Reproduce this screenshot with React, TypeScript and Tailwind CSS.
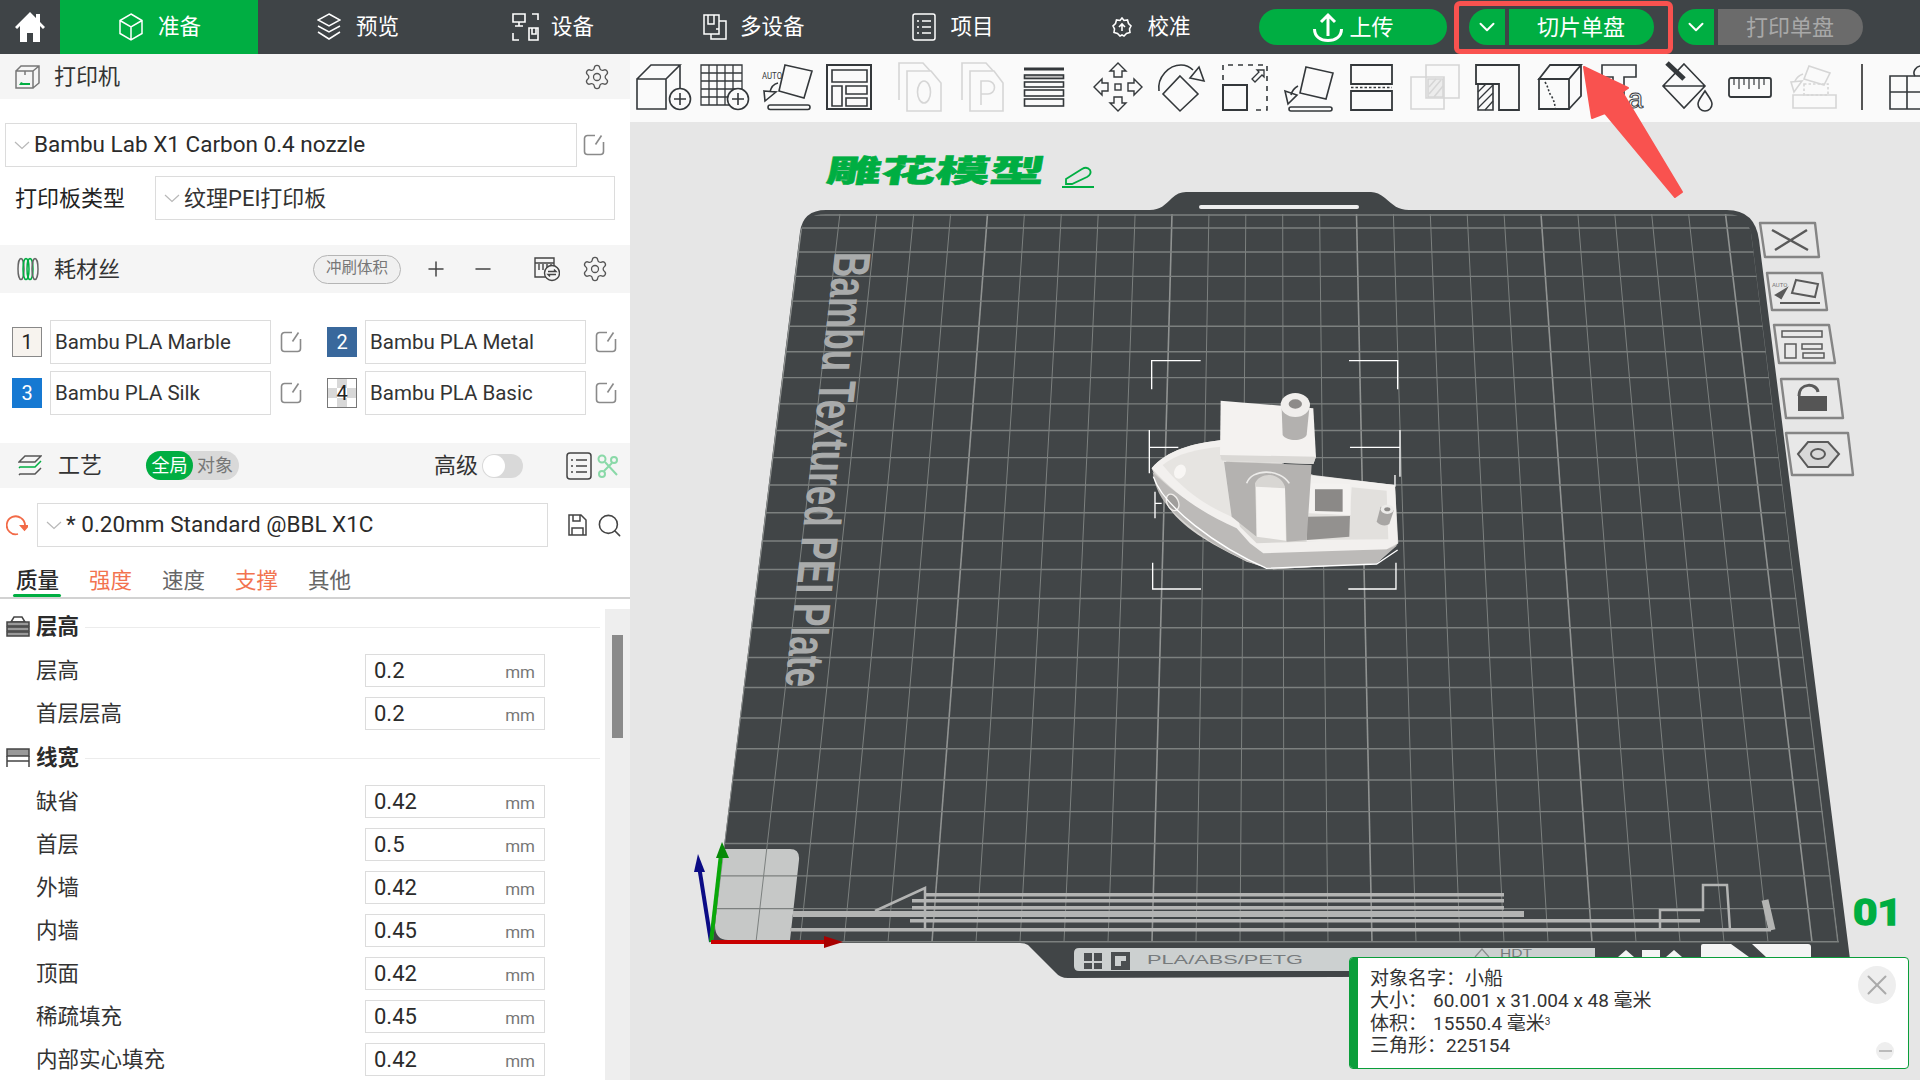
import { Settings, Plus, Minus, Search, X, ChevronDown } from "lucide-react";

const green = "#00ae42";
const dark = "#34383b";

function Chevron({ className = "" }: { className?: string }) {
  return (
    <svg width="16" height="9" viewBox="0 0 16 9" fill="none" stroke="#b8b8b8" strokeWidth="1.2" className={className}>
      <path d="M1 1l7 6.5L15 1" />
    </svg>
  );
}

function EditIcon({ className = "" }: { className?: string }) {
  return (
    <svg width="22" height="22" viewBox="0 0 22 22" fill="none" stroke="#8a8a8a" strokeWidth="1.6" className={className}>
      <path d="M12 1.5H4.5a3 3 0 0 0-3 3v13a3 3 0 0 0 3 3h13a3 3 0 0 0 3-3V8" />
      <path d="M18.5 1.5l-6 9" />
    </svg>
  );
}

function SectionTitle({ title, icon }: { title: string; icon: "stack" | "width" }) {
  return (
    <div className="flex items-center h-[36px] pr-[5px]">
      <svg width="24" height="22" viewBox="0 0 24 22" className="ml-[6px]" fill="none" stroke="#444" strokeWidth="1.5">
        {icon === "stack" ? (
          <g>
            <path d="M5 6l3-5h8l3 5z" />
            <rect x="1" y="6" width="22" height="4" fill="#999" />
            <rect x="1" y="11" width="22" height="4" fill="#999" />
            <rect x="1" y="16" width="22" height="4" fill="#999" />
          </g>
        ) : (
          <g>
            <rect x="1" y="2" width="22" height="7" fill="#999" />
            <path d="M1 9v11M23 9v11M1 14h22" />
          </g>
        )}
      </svg>
      <span className="ml-[6px] text-[21.5px] font-bold text-[#2b2b2b] leading-none">{title}</span>
      <div className="ml-[6px] flex-1 h-px bg-[#ececec]" />
    </div>
  );
}

function ParamRow({ label, value }: { label: string; value: string }) {
  return (
    <div className="flex items-center h-[33px]">
      <span className="ml-[36px] w-[329px] text-[21.5px] text-[#333] leading-none">{label}</span>
      <div className="w-[180px] h-[33px] border border-[#dcdcdc] flex items-center pl-[8px] pr-[9px] bg-white">
        <span className="text-[22px] text-[#2b2b2b] flex-1 leading-none">{value}</span>
        <span className="text-[17px] text-[#777] mt-[4px] leading-none">mm</span>
      </div>
    </div>
  );
}

function FilamentField({ num, name, swatch, dk }: { num: string; name: string; swatch: string; dk?: boolean }) {
  return (
    <div className="flex items-center">
      <div className={"w-[30px] h-[30px] flex items-center justify-center text-[20px] border " + swatch + (dk ? " text-white" : " text-[#222]")}>
        {num}
      </div>
      <div className="ml-[8px] w-[221px] h-[44px] border border-[#dcdcdc] flex items-center pl-[4px] text-[20.5px] text-[#333]">{name}</div>
      <EditIcon className="ml-[9px]" />
    </div>
  );
}

function CheckerField() {
  return (
    <div className="flex items-center">
      <div className="w-[30px] h-[30px] relative border border-[#777] grid grid-cols-3 grid-rows-3">
        <i className="bg-white" /><i className="bg-[#d8d8d8]" /><i className="bg-white" />
        <i className="bg-[#d8d8d8]" /><i className="bg-white" /><i className="bg-[#d8d8d8]" />
        <i className="bg-white" /><i className="bg-[#d8d8d8]" /><i className="bg-white" />
        <span className="absolute inset-0 flex items-center justify-center text-[20px] text-[#222]">4</span>
      </div>
      <div className="ml-[8px] w-[221px] h-[44px] border border-[#dcdcdc] flex items-center pl-[4px] text-[20.5px] text-[#333]">Bambu PLA Basic</div>
      <EditIcon className="ml-[9px]" />
    </div>
  );
}

function LeftPanel() {
  return (
    <div className="w-[630px] h-[1026px] flex flex-col bg-white overflow-hidden shrink-0">
      <div className="h-[45px] bg-[#f5f5f5] flex items-center shrink-0">
        <svg width="25" height="24" viewBox="0 0 25 24" fill="none" stroke="#777" strokeWidth="1.5" className="ml-[15px]">
          <path d="M1 6h17v17H1zM1 6l5-5h18v17l-6 5M18 6l6-5" />
          <path d="M4 20h11v-2H8l-2-1z" fill={green} stroke="none" />
          <path d="M10 6v4" />
        </svg>
        <span className="ml-[14px] text-[22px] text-[#333]">打印机</span>
        <Settings size={28} strokeWidth={1.1} color="#555" className="ml-auto mr-[19px]" />
      </div>

      <div className="mt-[24px] flex items-center shrink-0">
        <div className="ml-[5px] w-[572px] h-[44px] border border-[#dcdcdc] flex items-center pl-[8px]">
          <Chevron />
          <span className="ml-[4px] text-[22.5px] text-[#2b2b2b]">Bambu Lab X1 Carbon 0.4 nozzle</span>
        </div>
        <EditIcon className="ml-[6px]" />
      </div>

      <div className="mt-[9px] flex items-center shrink-0">
        <span className="ml-[15px] w-[140px] text-[22px] text-[#222]">打印板类型</span>
        <div className="w-[460px] h-[44px] border border-[#dcdcdc] flex items-center pl-[8px]">
          <Chevron />
          <span className="ml-[4px] text-[22px] text-[#333]">纹理PEI打印板</span>
        </div>
      </div>

      <div className="mt-[25px] h-[48px] bg-[#f5f5f5] flex items-center shrink-0">
        <svg width="22" height="24" viewBox="0 0 22 24" fill="none" strokeWidth="1.5" className="ml-[17px]">
          <ellipse cx="4" cy="12" rx="3" ry="10.5" stroke="#666" />
          <ellipse cx="9" cy="12" rx="3" ry="10.5" stroke={green} />
          <ellipse cx="13" cy="12" rx="3" ry="10.5" stroke={green} />
          <ellipse cx="18" cy="12" rx="3" ry="10.5" stroke="#666" />
        </svg>
        <span className="ml-[15px] w-[66px] text-[22px] text-[#333]">耗材丝</span>
        <div className="ml-[193px] w-[88px] h-[29px] rounded-full border border-[#b5b5b5] bg-[#f0f0f0] flex items-center justify-center text-[15.5px] text-[#777]">
          冲刷体积
        </div>
        <Plus size={24} strokeWidth={1.5} color="#444" className="ml-[23px]" />
        <Minus size={24} strokeWidth={1.5} color="#444" className="ml-[23px]" />
        <svg width="27" height="26" viewBox="0 0 27 26" fill="none" stroke="#444" strokeWidth="1.4" className="ml-[38px]">
          <path d="M2 2h19v5H2zM2 7h19v14H2zM6 8v6M10 8v6M14 8v6M18 8v6" />
          <circle cx="19" cy="17" r="7.5" fill="#f5f5f5" />
          <path d="M15 15.5h8l-2-2M23 18.5h-8l2 2" />
        </svg>
        <Settings size={28} strokeWidth={1.1} color="#555" className="ml-[21px]" />
      </div>

      <div className="mt-[27px] shrink-0 flex flex-col gap-[7px]">
        <div className="flex gap-[25px] pl-[12px]">
          <FilamentField num="1" name="Bambu PLA Marble" swatch="bg-[#f7f3ee] border-[#888]" />
          <FilamentField num="2" name="Bambu PLA Metal" swatch="bg-[#39689c] border-[#39689c]" dk />
        </div>
        <div className="flex gap-[25px] pl-[12px]">
          <FilamentField num="3" name="Bambu PLA Silk" swatch="bg-[#1679d2] border-[#1679d2]" dk />
          <CheckerField />
        </div>
      </div>

      <div className="mt-[28px] h-[45px] bg-[#f5f5f5] flex items-center shrink-0">
        <svg width="24" height="24" viewBox="0 0 24 24" fill="none" strokeWidth="1.5" className="ml-[18px]">
          <path d="M1 8l6-6h16l-6 6z" stroke="#555" />
          <path d="M1 14l1-1h15l6-6" stroke={green} />
          <path d="M1 21l1-1h15l6-6" stroke="#555" />
        </svg>
        <span className="ml-[16px] w-[44px] text-[22px] text-[#333]">工艺</span>
        <div className="ml-[44px] w-[93px] h-[29px] rounded-full bg-[#d9d9d9] flex items-center">
          <span className="w-[47px] h-[29px] rounded-full bg-[#00ae42] text-white text-[18px] flex items-center justify-center">全局</span>
          <span className="ml-[4px] text-[18px] text-[#777]">对象</span>
        </div>
        <span className="ml-[195px] text-[22px] text-[#333]">高级</span>
        <div className="ml-[4px] w-[41px] h-[24px] rounded-full bg-[#d9d9d9] flex items-center">
          <span className="w-[22px] h-[22px] rounded-full bg-white ml-px" />
        </div>
        <svg width="26" height="28" viewBox="0 0 26 28" fill="none" stroke="#444" strokeWidth="1.5" className="ml-[43px]">
          <rect x="1" y="1" width="24" height="26" rx="3" />
          <path d="M5 8h2M10 8h11M5 14h2M10 14h11M5 20h2M10 20h11" />
        </svg>
        <svg width="22" height="24" viewBox="0 0 22 24" fill="none" stroke="#8ad9a8" strokeWidth="2" className="ml-[5px]">
          <circle cx="5" cy="5" r="3.5" />
          <circle cx="17" cy="6" r="3" />
          <circle cx="5" cy="20" r="3" />
          <path d="M8 8l12 13M15 9l-8 8" />
        </svg>
      </div>

      <div className="mt-[15px] flex items-center shrink-0">
        <svg width="22" height="22" viewBox="0 0 22 22" fill="none" stroke="#f26a47" strokeWidth="1.8" className="ml-[6px]">
          <path d="M15 4A9 9 0 1 0 12 20" />
          <path d="M15 4a9 9 0 0 1 4 7" />
          <path d="M15 12h7l-3.500 4z" fill="#f26a47" />
        </svg>
        <div className="ml-[9px] w-[511px] h-[44px] border border-[#dcdcdc] flex items-center pl-[8px]">
          <Chevron />
          <span className="ml-[4px] text-[22.5px] text-[#2b2b2b]">* 0.20mm Standard @BBL X1C</span>
        </div>
        <svg width="19" height="22" viewBox="0 0 19 22" fill="none" stroke="#444" strokeWidth="1.5" className="ml-[20px]">
          <path d="M1 1h12l5 5v15H1zM5 1v6h7V1M4 21v-7h11v7" />
        </svg>
        <Search size={27} strokeWidth={1.4} color="#444" className="ml-[9px]" />
      </div>

      <div className="h-[52px] border-b-2 border-[#d2d2d2] flex items-end gap-[30px] pl-[16px] text-[21.5px] shrink-0">
        <span className="relative h-[32px] font-medium text-[#2b2b2b]">
          质量
          <i className="absolute -left-[3px] -right-[2px] bottom-0 h-[3px] bg-[#00ae42] rounded-full" />
        </span>
        <span className="h-[32px] text-[#f2734f]">强度</span>
        <span className="h-[32px] text-[#666]">速度</span>
        <span className="h-[32px] text-[#f2734f]">支撑</span>
        <span className="h-[32px] text-[#666]">其他</span>
      </div>

      <div className="flex flex-1 mt-[10px] min-h-0">
        <div className="w-[605px] shrink-0">
          <SectionTitle title="层高" icon="stack" />
          <div className="mt-[9px] flex flex-col gap-[10px]">
            <ParamRow label="层高" value="0.2" />
            <ParamRow label="首层层高" value="0.2" />
          </div>
          <div className="mt-[10px]">
            <SectionTitle title="线宽" icon="width" />
          </div>
          <div className="mt-[9px] flex flex-col gap-[10px]">
            <ParamRow label="缺省" value="0.42" />
            <ParamRow label="首层" value="0.5" />
            <ParamRow label="外墙" value="0.42" />
            <ParamRow label="内墙" value="0.45" />
            <ParamRow label="顶面" value="0.42" />
            <ParamRow label="稀疏填充" value="0.45" />
            <ParamRow label="内部实心填充" value="0.42" />
          </div>
        </div>
        <div className="flex-1 bg-[#eeeeee] pl-[7px] pt-[26px]">
          <div className="w-[11px] h-[103px] bg-[#8a8a8a]" />
        </div>
      </div>
    </div>
  );
}

function NavTab({ label, icon, pad, active }: { label: string; icon: React.ReactNode; pad: string; active?: boolean }) {
  return (
    <div className={"h-[54px] flex items-center text-white text-[21.5px] " + pad + (active ? " bg-[#00ae42]" : "")}>
      {icon}
      <span>{label}</span>
    </div>
  );
}

function TopBar() {
  return (
    <div className="h-[54px] bg-[#3f4447] flex items-center shrink-0">
      <div className="w-[60px] h-[54px] flex items-center justify-center">
        <svg width="30" height="30" viewBox="0 0 30 30" fill="#fff">
          <path d="M15 0L0 15l2 2 3-3v16h7v-9h6v9h7V14l3 3 2-2-5-5V2h-4v4z" />
        </svg>
      </div>
      <NavTab
        active
        label="准备"
        pad="w-[198px] pl-[59px]"
        icon={
          <svg width="24" height="28" viewBox="0 0 24 28" fill="none" stroke="#fff" strokeWidth="1.5" className="mr-[15px]">
            <path d="M12 1l11 6.500v13L12 27 1 20.500v-13zM1 7.500l11 6.500 11-6.500M12 14v13" />
          </svg>
        }
      />
      <NavTab
        label="预览"
        pad="ml-[59px]"
        icon={
          <svg width="24" height="28" viewBox="0 0 24 28" fill="none" stroke="#fff" strokeWidth="1.5" className="mr-[15px]">
            <path d="M12 1l11 6-11 6L1 7zM1 13l11 6 11-6M1 19l11 7 11-7" />
          </svg>
        }
      />
      <NavTab
        label="设备"
        pad="ml-[113px]"
        icon={
          <svg width="27" height="28" viewBox="0 0 27 28" fill="none" stroke="#fff" strokeWidth="1.6" className="mr-[12px]">
            <path d="M1 1h12v8H1zM7 9v4M3 13h8M20 1h6v6M1 20v7h6M17 15h9v12h-9zM20 15v6h4v-6" />
          </svg>
        }
      />
      <NavTab
        label="多设备"
        pad="ml-[109px]"
        icon={
          <svg width="24" height="26" viewBox="0 0 24 26" fill="none" stroke="#fff" strokeWidth="1.5" className="mr-[13px]">
            <path d="M1 1h15v19H1zM5 1v9h6V1M16 7h7v18H8v-5M13 15h3" />
          </svg>
        }
      />
      <NavTab
        label="项目"
        pad="ml-[107px]"
        icon={
          <svg width="24" height="28" viewBox="0 0 24 28" fill="none" stroke="#fff" strokeWidth="1.5" className="mr-[15px]">
            <rect x="1" y="1" width="22" height="26" rx="2" />
            <path d="M5 8h2M10 8h9M5 14h2M10 14h9M5 20h2M10 20h9" />
          </svg>
        }
      />
      <NavTab
        label="校准"
        pad="ml-[118px]"
        icon={
          <svg width="20" height="20" viewBox="0 0 20 20" fill="none" stroke="#fff" strokeWidth="1.6" className="mr-[16px]">
            <path d="M10 1l2 2.500 3.500-.5 1 3.500L19 9l-1.500 3 .5 3.500-3.500 1L12 19l-2-1-2 1-2.500-2.500-3.500-1 .5-3.500L1 9l2.500-2.500 1-3.500 3.500.5z" />
            <path d="M10 14V7M7 10l3-3 3 3" />
          </svg>
        }
      />
      <div className="ml-[68px] w-[188px] h-[36px] rounded-full bg-[#00ae42] flex items-center text-white text-[22px]">
        <svg width="30" height="30" viewBox="0 0 30 30" fill="none" stroke="#fff" strokeWidth="3" className="ml-[54px] mr-[7px]">
          <path d="M15 24V3M8 10l7-7 7 7" />
          <path d="M1.500 17c0 7.500 6 11.500 13.500 11.500S28.500 24.500 28.500 17" />
        </svg>
        上传
      </div>
      <div className="ml-[22px] flex items-center">
        <div className="w-[36px] h-[36px] rounded-l-full bg-[#00ae42] flex items-center justify-center">
          <ChevronDown size={26} color="#fff" strokeWidth={1.8} />
        </div>
        <div className="ml-[4px] w-[145px] h-[36px] rounded-r-full bg-[#00ae42] flex items-center justify-center text-white text-[22px]">切片单盘</div>
      </div>
      <div className="ml-[24px] flex items-center">
        <div className="w-[36px] h-[36px] rounded-l-full bg-[#00ae42] flex items-center justify-center">
          <ChevronDown size={26} color="#fff" strokeWidth={1.8} />
        </div>
        <div className="ml-[4px] w-[145px] h-[36px] rounded-r-full bg-[#6b6b6b] flex items-center justify-center text-[#a8a8a8] text-[22px]">打印单盘</div>
      </div>
    </div>
  );
}

function Ic({ w, h, ml, off, children }: { w: number; h: number; ml: string; off?: boolean; children: React.ReactNode }) {
  return (
    <svg
      width={w}
      height={h}
      viewBox={`0 0 ${w} ${h}`}
      fill="none"
      stroke={off ? "#d6d6d6" : dark}
      strokeWidth="1.6"
      className={ml + " shrink-0 overflow-visible"}
    >
      {children}
    </svg>
  );
}

function Toolbar() {
  return (
    <div className="h-[68px] bg-[#fafafa] flex items-center shrink-0 overflow-hidden pb-[2px]">
      <Ic w={55} h={47} ml="ml-[6px]">
        <path d="M1 15h29v30H1zM1 15L15 1h29L30 15M44 1v26" />
        <circle cx="44" cy="35" r="10.500" fill="#fafafa" />
        <path d="M38 35h12M44 29v12" />
      </Ic>
      <Ic w={50} h={47} ml="ml-[9px]">
        <path d="M1 1h41v40H1zM9 1v40M17 1v40M25 1v40M33 1v40M1 9h41M1 17h41M1 25h41M1 33h41" strokeWidth="1.3" />
        <circle cx="38" cy="35" r="10.500" fill="#fafafa" />
        <path d="M32 35h12M38 29v12" />
      </Ic>
      <Ic w={51} h={46} ml="ml-[12px]">
        <path d="M23 1l27 6-8 27-25-7z" />
        <path d="M2 27l12 1-11 9zM8 28c1-5 4-8 8-9" />
        <rect x="6" y="41" width="42" height="4.500" rx="2.200" />
        <text x="0" y="15" fontSize="9" textLength="20" lengthAdjust="spacingAndGlyphs" stroke="none" fill={dark} fontFamily="Roboto">AUTO</text>
      </Ic>
      <Ic w={46} h={46} ml="ml-[13px]">
        <path d="M1 1h44v44H1z" strokeWidth="2" />
        <path d="M6 6h35v12H6zM6 22h10v20H6zM20 22h21v8H20zM20 34h21v8H20z" />
      </Ic>
      <Ic w={43} h={50} ml="ml-[26px]" off>
        <path d="M1 38V1h24l9 10" />
        <path d="M9 9h24l10 12v28H9z" fill="#fafafa" />
        <ellipse cx="26" cy="30" rx="6.500" ry="11" />
      </Ic>
      <Ic w={42} h={50} ml="ml-[20px]" off>
        <path d="M1 38V1h24l9 10" />
        <path d="M9 9h24l9 12v28H9z" fill="#fafafa" />
        <path d="M20 43V19h7a6.500 6.500 0 0 1 0 13h-7" />
      </Ic>
      <Ic w={40} h={38} ml="ml-[21px]">
        <path d="M0 1h40" strokeWidth="3" />
        <rect x="0.500" y="7" width="39" height="3.500" fill="#bbb" />
        <rect x="0.500" y="14" width="39" height="5" />
        <rect x="0.500" y="22" width="39" height="6" />
        <rect x="0.500" y="31" width="39" height="7" />
      </Ic>
      <Ic w={50} h={50} ml="ml-[29px]">
        <g strokeWidth="1.400">
          <path d="M25 1l8 8h-4v6h-8v-6h-4z" />
          <path d="M25 1l8 8h-4v6h-8v-6h-4z" transform="rotate(90 25 25)" />
          <path d="M25 1l8 8h-4v6h-8v-6h-4z" transform="rotate(180 25 25)" />
          <path d="M25 1l8 8h-4v6h-8v-6h-4z" transform="rotate(270 25 25)" />
          <rect x="22" y="22" width="6" height="6" />
        </g>
      </Ic>
      <Ic w={49} h={48} ml="ml-[14px]">
        <path d="M23 13l18 18-18 17L6 31z" />
        <path d="M2 28C0 14 12 2 24 2c5 0 9 2 12 5" />
        <path d="M42 4l5 14-14-3z" />
      </Ic>
      <Ic w={46} h={47} ml="ml-[16px]">
        <path d="M1 21h24v25H1z" strokeWidth="2" />
        <path d="M1 16V1h44v45H30" strokeDasharray="5 5" />
        <path d="M30 15l7-7-2-2h7v7l-2-2-7 7z" strokeWidth="1.300" />
      </Ic>
      <Ic w={49} h={47} ml="ml-[16px]">
        <path d="M22 3l27 6-7 26-26-6z" />
        <path d="M1 27l12 4-9 9zM7 31c1-4 3-7 7-9" />
        <rect x="5" y="43" width="43" height="4" rx="2" />
      </Ic>
      <Ic w={42} h={46} ml="ml-[17px]">
        <path d="M1 1h41v19H1zM1 27h41v19H1z" strokeWidth="1.800" />
        <path d="M1 23.500h41" strokeDasharray="2.500 2" />
      </Ic>
      <Ic w={49} h={46} ml="ml-[18px]" off>
        <path d="M1 13h33v32H1zM16 1h33v33H16z" />
        <path d="M18 15h15v18H18z" fill="#ececec" />
        <path d="M19 30l12-14M19 23l7-8M24 33l9-11" />
      </Ic>
      <Ic w={44} h={46} ml="ml-[16px]">
        <path d="M1 1h43v45H24V20H1z" strokeWidth="1.800" />
        <path d="M3 20h15v26H3z" />
        <path d="M3 28l8-8M3 36l15-15M3 44l15-15M10 46l8-9" strokeWidth="1.300" />
      </Ic>
      <Ic w={44} h={46} ml="ml-[19px]">
        <path d="M1 15L12 1h31L31 15zM1 15h30v30H1zM31 45l12-13V1" strokeWidth="1.800" />
        <path d="M7 18c4 6 3 10 7 15 2 4 3 7 3 11" strokeDasharray="2 2" />
      </Ic>
      <Ic w={45} h={46} ml="ml-[19px]">
        <path d="M1 1h34v12H23v30H12V13H1z" />
        <text x="27" y="44" fontSize="27" fill="#fafafa" stroke={dark} strokeWidth="1" fontFamily="Liberation Sans">a</text>
      </Ic>
      <Ic w={50} h={48} ml="ml-[17px]">
        <path d="M21 1l21 22-21 22L0 23zM0 23h42" />
        <path d="M4 0l17 16" strokeWidth="5" />
        <path d="M42 28c3 5 7 9 7 13a7 7 0 0 1-14 0c0-4 4-8 7-13z" fill="#fafafa" />
      </Ic>
      <Ic w={44} h={21} ml="ml-[15px]">
        <rect x="1" y="1" width="42" height="19" rx="2" strokeWidth="1.800" />
        <path d="M6 1v7M11 1v11M16 1v7M21 1v11M26 1v7M31 1v11M36 1v7" strokeWidth="1.200" />
      </Ic>
      <Ic w={47} h={44} ml="ml-[18px]" off>
        <path d="M19 1l21 7-6 12-20-6z" />
        <path d="M1 17l11-1-8 11zM5 16c2-4 5-6 8-7" />
        <path d="M14 19h24v11H14z" strokeDasharray="2.500 2" />
        <path d="M3 30h43v13H3z" />
      </Ic>
      <div className="ml-[24px] w-[2px] h-[46px] bg-[#555] shrink-0" />
      <Ic w={40} h={46} ml="ml-[26px]">
        <path d="M1 12h17v16H1zM1 28h17v17H1zM18 12h22v33H18zM18 28h22" />
        <path d="M26 12c-3-4 1-10 6-10s9 6 6 10" />
      </Ic>
    </div>
  );
}

function Boat() {
  return (
    <g transform="translate(1100 340) scale(0.3333)" stroke="none">
      <g fill="none" stroke="#fff" strokeWidth="4">
        <path d="M155 148V62H302M747 62H893V148M158 668V747H303M745 747H888V668" />
        <path d="M148 270V400M148 322H235M750 322H900M900 270V410M885 405V440M165 455V535M165 490H185" />
      </g>
      <path d="M155 385C200 330 280 310 365 300L640 405L885 435L895 610L830 670L520 688L440 665C350 620 250 570 205 500Z" fill="#d8d6d3" />
      <path d="M158 395C165 450 190 490 230 525C300 590 380 640 470 675L520 688L830 670L893 615L860 628L480 632L420 565C330 525 230 470 158 395Z" fill="#bcbab8" />
      <path d="M155 385C200 330 280 310 365 300L420 560L470 610L620 605L860 600L893 610L860 628L490 640L450 610L410 565C320 525 230 470 155 385Z" fill="#f2f0ee" />
      <path d="M188 375C230 340 300 325 365 320L395 530C310 495 240 440 188 375Z" fill="#e6e4e1" />
      <ellipse cx="240" cy="395" rx="17" ry="22" transform="rotate(25 240 395)" fill="#f8f6f4" />
      <ellipse cx="218" cy="487" rx="17" ry="26" transform="rotate(-25 218 487)" fill="#a09e9c" stroke="#f0eeec" strokeWidth="4" />
      <path d="M625 405L885 435L893 610L620 605Z" fill="#f2f0ee" />
      <path d="M755 442L860 452L865 598L620 600L625 520L750 525Z" fill="#e2e0dd" />
      <path d="M620 530L750 528L748 590L620 600Z" fill="#93918f" />
      <path d="M625 430L750 432L752 525L625 518Z" fill="#f4f2f0" />
      <path d="M645 448L728 448L728 515L645 513Z" fill="#8b8987" />
      <path d="M372 365L635 375L620 600L560 605L555 440C540 395 480 395 465 430L470 590L395 530Z" fill="#b4b2b0" />
      <path d="M468 440L555 445L558 602L470 590Z" fill="#f5f3f1" />
      <path d="M440 430C455 385 540 385 568 430" fill="none" stroke="#ecebe9" strokeWidth="5" />
      <path d="M362 182L640 205L648 350L640 372L365 362L360 345Z" fill="#f4f2f0" />
      <path d="M360 345L648 350L640 372L365 362Z" fill="#dad8d5" />
      <path d="M545 205L548 285C560 305 610 305 620 285L628 205Z" fill="#b3b1af" />
      <ellipse cx="586" cy="195" rx="44" ry="36" fill="#f0eeec" />
      <ellipse cx="586" cy="192" rx="20" ry="14" fill="#8d8b89" />
      <path d="M830 545L842 500L882 510L868 552C858 560 838 556 830 545Z" fill="#a8a6a4" />
      <ellipse cx="862" cy="508" rx="20" ry="14" fill="#ecebe9" />
      <ellipse cx="862" cy="508" rx="9" ry="6" fill="#8d8b89" />
      <path d="M160 410C190 500 350 620 500 685L830 672L893 630" fill="none" stroke="#fff" strokeWidth="4" />
    </g>
  );
}

const vLines = Array.from({ length: 26 }, (_, k) => k);
const hLines = Array.from({ length: 26 }, (_, m) => m);

function Plate() {
  return (
    <svg viewBox="630 122 1290 958" className="absolute inset-0 w-[1290px] h-[958px]">
      <defs>
        <clipPath id="gridArea">
          <path d="M712 943L800 234Q803 214 826 214H1727Q1750 214 1752 240L1839 943Z" />
        </clipPath>
      </defs>
      <path
        d="M712 943L800 232Q803 210 826 210L1150 210C1160 210 1165 205 1172 198Q1178 192 1186 192L1371 192Q1378 192 1385 198C1393 205 1398 210 1409 210L1727 210Q1755 210 1759 240L1852 975L1068 978Q1060 978 1055 972L1028 945Q1025 943 1020 943Z"
        fill="#414547"
      />
      <rect x="1199" y="205" width="160" height="4" rx="2" fill="#eeeeee" />
      <path d="M722 849H790Q800 849 799 860L790 940H728Q715 940 715 925L722 860Q722 849 722 849Z" fill="#c6c8c7" />
      <g stroke="#7c807f" clipPath="url(#gridArea)">
        {vLines.map((k) => (
          <line
            key={k}
            x1={803 + 36.9 * k}
            y1={214}
            x2={712 + 44 * k}
            y2={942}
            strokeWidth={k % 5 === 0 ? 1.6 : 1}
            stroke={k % 5 === 0 ? "#909392" : "#7c807f"}
          />
        ))}
        {hLines.map((m) => {
          const y = 228 + 23.8 * m + 0.19 * m * m;
          const t = (y - 214) / 728;
          return <line key={m} x1={803 - 91 * t} y1={y} x2={1750 + 89 * t} y2={y} strokeWidth={1.4} />;
        })}
        <line x1={803} y1={215} x2={1750} y2={215} strokeWidth={1.6} />
        <line x1={1751} y1={226} x2={1838} y2={942} strokeWidth={1.6} />
      </g>

      <text
        transform="matrix(-0.115 1 -1 0 835 252)"
        fontSize="52"
        fontWeight="700"
        textLength="435"
        lengthAdjust="spacingAndGlyphs"
        fill="#a9abab"
        fontFamily="Liberation Sans"
      >
        Bambu Textured PEI Plate
      </text>

      <g fill="#b3b4b3">
        <rect x="925" y="893" width="579" height="3.500" />
        <rect x="912" y="899" width="592" height="3.500" />
        <rect x="912" y="906" width="592" height="3.500" />
        <rect x="793" y="911" width="731" height="6" />
        <rect x="910" y="919" width="790" height="3.500" />
        <rect x="790" y="928" width="981" height="3.500" />
      </g>
      <path d="M875 911L925 888V930M1660 930V910H1703V885H1727L1730 930" fill="none" stroke="#b3b4b3" strokeWidth="2.500" />
      <path d="M1765 900L1772 930" stroke="#b3b4b3" strokeWidth="7" />

      <path d="M1074 953Q1074 948 1079 948H1595V971H1079Q1074 971 1074 966Z" fill="#ccd0d0" />
      <g fill="#4a4e50">
        <path d="M1084 953h8v8h-8zM1094 953h8v8h-8zM1084 963h8v6h-8zM1094 963h8v6h-8z" />
        <path d="M1111 952h19v18h-19zM1115 956v10h6v-5h5v-5z" fillRule="evenodd" />
      </g>
      <text x="1147" y="964" fontSize="13" textLength="156" lengthAdjust="spacingAndGlyphs" fill="#777b7d" fontFamily="Liberation Sans">PLA/ABS/PETG</text>
      <path d="M1475 957L1482 949L1489 957" fill="none" stroke="#8a8d8d" strokeWidth="1.200" />
      <text x="1500" y="957" fontSize="11" textLength="32" lengthAdjust="spacingAndGlyphs" fill="#777b7d" fontFamily="Liberation Sans">HDT</text>
      <path d="M1618 957L1626 950L1634 957ZM1642 957V950H1660V957ZM1666 957L1674 950L1682 957Z" fill="#f4f4f4" />
      <path d="M1701 946Q1701 944 1703 944H1731L1749 957H1701ZM1752 944H1808Q1811 944 1811 947V957H1766Z" fill="#f4f4f4" />

      <path d="M711 942L699 866" stroke="#0b0b85" strokeWidth="4" />
      <path d="M698 854L705 872H694Z" fill="#0b0b85" />
      <path d="M711 942L721 854" stroke="#0aa80a" strokeWidth="4" />
      <path d="M722 842L729 858H716Z" fill="#078a07" />
      <path d="M711 942H826" stroke="#c80000" strokeWidth="4" />
      <path d="M843 942L824 936V948Z" fill="#a80000" />

      <Boat />

      <g fill="#e8e8e8" stroke="#858585" strokeWidth="2.400" strokeLinejoin="round">
        <path d="M1760 223H1815L1819 257H1765Z" />
        <path d="M1767 273H1822L1827 310H1772Z" />
        <path d="M1774 325H1829L1835 363H1779Z" />
        <path d="M1781 379H1838L1843 418H1786Z" />
        <path d="M1786 433H1848L1853 475H1792Z" />
      </g>
      <g fill="none" stroke="#5a5a5a" strokeWidth="2">
        <path d="M1772 230L1808 250M1807 230L1775 250" strokeWidth="2.500" />
        <path d="M1796 280L1818 284L1815 297L1792 293ZM1780 303H1820" />
        <path d="M1776 295L1786 289L1781 298Z" fill="#5a5a5a" />
        <path d="M1782 331H1822V337H1782ZM1785 344H1796V358H1785ZM1802 344H1822V349H1802ZM1803 353H1824V358H1803Z" strokeWidth="1.500" />
        <path d="M1799 396C1799 382 1817 383 1818 392" strokeWidth="3" />
        <path d="M1798 396H1827V411H1798Z" fill="#555" stroke="none" />
        <path d="M1798 454L1808 442H1828L1839 454L1828 467H1808Z" fill="#d8d8d8" />
        <ellipse cx="1818" cy="454" rx="7" ry="5" />
      </g>
      <text x="1772" y="287" fontSize="6" fill="#777" fontFamily="Roboto">AUTO</text>

      <text
        transform="translate(825 182) skewX(-10)"
        fontSize="31"
        fontWeight="900"
        textLength="218"
        lengthAdjust="spacingAndGlyphs"
        fill="#00ae42"
        stroke="#00ae42"
        strokeWidth="0.500"
        fontFamily="Noto Sans CJK SC"
      >
        雕花模型
      </text>
      <path d="M1066 179L1082 169Q1087 166 1090 170Q1092 174 1087 177L1072 184L1066 184ZM1062 187H1094" fill="none" stroke="#00ae42" strokeWidth="1.800" />
      <text x="1853" y="925" fontSize="37" fontWeight="700" textLength="49" lengthAdjust="spacingAndGlyphs" fill="#00ae42" stroke="#00ae42" strokeWidth="1.500" fontFamily="Roboto">01</text>
    </svg>
  );
}

function Notification() {
  return (
    <div className="absolute right-[11px] bottom-[11px] w-[560px] h-[112px] bg-white border border-[#0a9e3a] rounded-[4px] flex overflow-hidden">
      <div className="w-[8px] bg-[#0a9e3a] shrink-0" />
      <div className="ml-[12px] mt-[9.500px] text-[19px] leading-[22.500px] text-[#333]">
        <div>对象名字：小船</div>
        <div>大小：<span className="ml-[6px]">60.001 x 31.004 x 48 毫米</span></div>
        <div>体积：<span className="ml-[6px]">15550.4 毫米<sup className="text-[10px]">3</sup></span></div>
        <div>三角形：225154</div>
      </div>
      <div className="absolute right-[12px] top-[8px] w-[38px] h-[38px] rounded-full bg-[#eeeeee] flex items-center justify-center">
        <X size={34} strokeWidth={1.4} color="#aaa" />
      </div>
      <div className="absolute right-[14px] bottom-[8px] w-[18px] h-[18px] rounded-full bg-[#eeeeee] flex items-center justify-center">
        <div className="w-[13px] h-[2px] bg-[#bbb]" />
      </div>
    </div>
  );
}

export default function App() {
  return (
    <div className="relative w-[1920px] h-[1080px] overflow-hidden flex flex-col bg-white font-['Roboto','Noto_Sans_CJK_SC',sans-serif]">
      <TopBar />
      <div className="flex flex-1 min-h-0">
        <LeftPanel />
        <div className="flex-1 flex flex-col min-w-0">
          <Toolbar />
          <div className="relative flex-1 bg-[#e6e6e6]">
            <Plate />
            <Notification />
          </div>
        </div>
      </div>
      <div className="absolute left-[1454px] top-[1px] w-[219px] h-[53px] border-[5px] border-[#f9524f] rounded-[6px]" />
      <svg width="110" height="140" viewBox="1580 62 110 140" className="absolute left-[1580px] top-[62px]">
        <path d="M1584 67L1628 88L1622 92L1682 192L1675 197L1605 113L1592 118Z" fill="#f9524f" stroke="#f9524f" strokeLinejoin="round" strokeWidth="2" />
      </svg>
    </div>
  );
}
